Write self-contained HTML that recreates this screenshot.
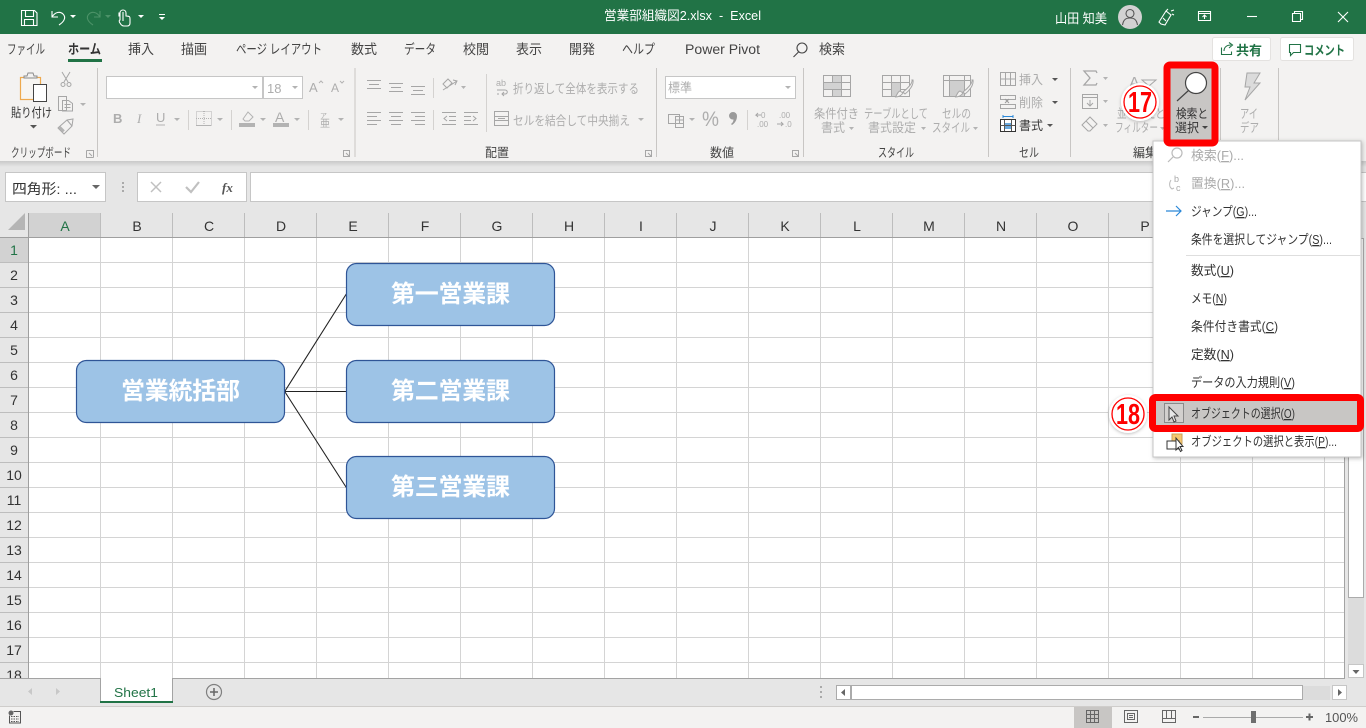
<!DOCTYPE html>
<html lang="ja"><head><meta charset="utf-8"><title>営業部組織図2.xlsx - Excel</title>
<style>
html,body{margin:0;padding:0;background:#fff;overflow:hidden}
svg{display:block}
text{font-family:"Liberation Sans","Noto Sans CJK JP",sans-serif;font-size:12.5px;fill:#444;white-space:pre}
.g{fill:#adadad}
.t{font-size:13.500px;fill:#444}
.h{font-size:14px;fill:#333;text-anchor:middle}
.w{fill:#fff;font-size:13px}
.s{fill:#fff;font-size:24px;font-weight:700;text-anchor:middle}
.m{font-size:13px;fill:#333}
.mg{font-size:13px;fill:#aaa}
.u{text-decoration:underline}
.i{fill:none;stroke:#b3b3b3;stroke-width:1}
.n{fill:none;stroke:#a6a6a6;stroke-width:1}
.a{fill:#b3b3b3}
.c{font-size:29px;font-weight:700;fill:#f00;text-anchor:middle}
</style></head><body>
<svg width="1366" height="728" viewBox="0 0 1366 728" xmlns="http://www.w3.org/2000/svg">
<defs>
<linearGradient id="sh" x1="0" y1="0" x2="0" y2="1"><stop offset="0" stop-color="#c9c9c9"/><stop offset="1" stop-color="#e6e6e6"/></linearGradient>
<filter id="ms" x="-5%" y="-5%" width="110%" height="110%"><feDropShadow dx="1" dy="1" stdDeviation="2" flood-color="#000" flood-opacity=".25"/></filter>
<filter id="cs" x="-30%" y="-30%" width="160%" height="160%"><feDropShadow dx="0" dy="1" stdDeviation="1.500" flood-color="#000" flood-opacity=".25"/></filter>
</defs>

<!-- backgrounds -->
<rect width="1366" height="728" fill="#fff"/>
<rect y="34" width="1366" height="128" fill="#f3f2f1"/>
<rect width="1366" height="34" fill="#217346"/>
<rect y="161" width="1366" height="52" fill="#e6e6e6"/>
<rect y="161" width="1366" height="6" fill="url(#sh)"/>

<!-- title bar -->
<g fill="none" stroke="#fff" stroke-width="1.100">
<path d="M21.500 10.500h13l2.500 2.500v12.500h-15.500z"/><path d="M25.500 10.500v6h8v-6M24.500 25.500v-6h9v6"/>
<path d="M52 11v6h6M52 17c3-5 8-6 11-3 3 3 2 7-4 11"/>
</g>
<path d="M70 15h6l-3 3z" fill="#fff"/>
<g fill="none" stroke="#4c9268" stroke-width="1.100"><path d="M100 11v6h-6M100 17c-3-5-8-6-11-3-3 3-2 7 4 11"/></g>
<path d="M105 15h6l-3 3z" fill="#4c9268"/>
<g fill="none" stroke="#fff" stroke-width="1.100"><path d="M120 20v-7c0-4 6-4 6 0v3c4 0 4 1 4 3v4c0 2-1 3-3 3h-3c-2 0-3-1-4-3-1-1-1-3 0-3zM120 13h-1v3h1M123 12v9"/></g>
<path d="M138 15h6l-3 3z" fill="#fff"/>
<path d="M159 14h6v1h-6zM159 17h6l-3 3z" fill="#fff"/>
<text x="604" y="20" class="w" textLength="157" lengthAdjust="spacingAndGlyphs">営業部組織図2.xlsx  -  Excel</text>
<text x="1055" y="23" class="w" textLength="52" lengthAdjust="spacingAndGlyphs">山田 知美</text>
<circle cx="1130" cy="17" r="12" fill="#d2d2d2"/>
<g fill="none" stroke="#555" stroke-width="1.100"><circle cx="1130" cy="13.500" r="4"/><path d="M1122.500 25c1-6 4-7 7.500-7s6.500 1 7.500 7"/></g>
<g fill="none" stroke="#fff" stroke-width="1.100"><path d="M1161 24l-2-2 7-11 5 4-6 10zM1166 11l2-2M1171 11l3-1M1172 14l2 1M1163 18l3 3"/></g>
<g fill="none" stroke="#fff" stroke-width="1.100"><path d="M1198.500 11.500h12v9h-12zM1198.500 13.500h12M1204.500 19v-4M1202.500 17l2-2 2 2"/></g>
<path d="M1247 16.500h10" stroke="#fff" stroke-width="1.100"/>
<g fill="none" stroke="#fff" stroke-width="1.100"><path d="M1292.500 13.500h8v8h-8zM1294.500 13.500v-2h8v8h-2"/></g>
<path d="M1338 12l10 10M1348 12l-10 10" stroke="#fff" stroke-width="1.100"/>

<!-- tabs -->
<text x="7" y="54" class="t" textLength="38" lengthAdjust="spacingAndGlyphs">ファイル</text>
<text x="68" y="54" class="t" style="font-weight:700;fill:#333" textLength="33" lengthAdjust="spacingAndGlyphs">ホーム</text>
<rect x="68" y="59" width="34" height="3" fill="#217346"/>
<text x="128" y="54" class="t" textLength="26" lengthAdjust="spacingAndGlyphs">挿入</text>
<text x="181" y="54" class="t" textLength="26" lengthAdjust="spacingAndGlyphs">描画</text>
<text x="236" y="54" class="t" textLength="86" lengthAdjust="spacingAndGlyphs">ページ レイアウト</text>
<text x="351" y="54" class="t" textLength="26" lengthAdjust="spacingAndGlyphs">数式</text>
<text x="404" y="54" class="t" textLength="32" lengthAdjust="spacingAndGlyphs">データ</text>
<text x="463" y="54" class="t" textLength="26" lengthAdjust="spacingAndGlyphs">校閲</text>
<text x="516" y="54" class="t" textLength="26" lengthAdjust="spacingAndGlyphs">表示</text>
<text x="569" y="54" class="t" textLength="26" lengthAdjust="spacingAndGlyphs">開発</text>
<text x="622" y="54" class="t" textLength="33" lengthAdjust="spacingAndGlyphs">ヘルプ</text>
<text x="685" y="54" class="t" textLength="75" lengthAdjust="spacingAndGlyphs">Power Pivot</text>
<g fill="none" stroke="#444" stroke-width="1.100"><circle cx="802" cy="48" r="5"/><path d="M798.500 52l-5 5"/></g>
<text x="819" y="54" class="t" textLength="26" lengthAdjust="spacingAndGlyphs">検索</text>

<!-- share / comment -->
<rect x="1212.500" y="37.500" width="58" height="23" rx="2" fill="#fff" stroke="#e4e2e0"/>
<rect x="1280.500" y="37.500" width="73" height="23" rx="2" fill="#fff" stroke="#e4e2e0"/>
<g fill="none" stroke="#217346" stroke-width="1.100"><path d="M1221.500 47.500v7h10v-3M1224 51c0-4 3-6 7-6M1229 42.500l3.500 2.500-3.500 3"/></g>
<text x="1236" y="55" style="font-size:13px;font-weight:700;fill:#217346" textLength="26">共有</text>
<path d="M1289.500 44.500h11v8h-7l-3 3v-3h-1z" fill="none" stroke="#217346" stroke-width="1.100"/>
<text x="1304" y="55" style="font-size:13px;font-weight:700;fill:#217346" textLength="41" lengthAdjust="spacingAndGlyphs">コメント</text>

<!-- ribbon separators -->
<path d="M97.500 68v89M355 68v89M656.500 68v89M803.500 68v89M988.500 68v89M1070.500 68v89M1220.500 68v72M1278.500 68v72" stroke="#c8c6c4"/>
<path d="M433.500 78v20M433.500 110v20M486.500 74v58M188.500 110v20M231.500 110v20M308.500 110v20M747.500 110v20" stroke="#d4d2d0"/>

<!-- clipboard -->
<rect x="20.500" y="77.500" width="20" height="22" fill="#f7f5f2" stroke="#eea94e" stroke-width="1.200"/>
<path d="M24 78h13v-2h-3l-1-3h-5l-1 3h-3z" fill="#f3f2f1" stroke="#8a8a8a"/>
<rect x="33.500" y="84.500" width="13" height="17" fill="#fff" stroke="#444"/>
<text x="11" y="117" style="fill:#333" textLength="41" lengthAdjust="spacingAndGlyphs">貼り付け</text>
<path d="M30 125h7l-3.500 3.500z" fill="#555"/>
<g class="n"><path d="M62 72l6 10M70 72l-6 10"/><circle cx="63" cy="84.500" r="2"/><circle cx="69" cy="84.500" r="2"/></g>
<g class="n"><path d="M58.500 96.500h8v14h-8zM62.500 100.500h6l4 3v7.500h-10zM64.500 104.500h6M64.500 107.500h6"/></g>
<path d="M80 103h6l-3 3z" class="a"/>
<g class="n"><path d="M59 127l8-7 6-1-1 7-8 8-6-6zM67 120l5 6"/></g>
<rect x="59" y="128" width="6" height="3" class="a" transform="rotate(45 62 129)"/>
<text x="11" y="157" style="fill:#444" textLength="60" lengthAdjust="spacingAndGlyphs">クリップボード</text>
<g class="n"><path d="M86.500 150.500h7v7M86.500 150.500v7h7M89 153l3 3"/></g>

<!-- font -->
<rect x="106.500" y="76.500" width="156" height="22" fill="#fff" stroke="#c6c6c6"/>
<rect x="263.500" y="76.500" width="39" height="22" fill="#fff" stroke="#c6c6c6"/>
<path d="M252 86h6l-3 3zM292 86h6l-3 3z" class="a"/>
<text x="267" y="93" class="g" style="font-size:13px">18</text>
<text x="309" y="92" class="g" style="font-size:13px">A</text><path d="M319 83l2-2 2 2" class="i"/>
<text x="331" y="92" class="g" style="font-size:12px">A</text><path d="M340 81l2 2 2-2" class="i"/>
<text x="113" y="123" class="g" style="font-size:13px;font-weight:700">B</text>
<text x="137" y="123" class="g" style="font-size:13px;font-style:italic;font-family:'Liberation Serif',serif">I</text>
<text x="156" y="122" class="g" style="font-size:13px">U</text><path d="M156 125h9" class="i"/>
<path d="M174 118h6l-3 3z" class="a"/>
<g class="i" stroke-dasharray="1 1"><path d="M196.500 111.500h15v14h-15zM204 111v14M196 118.500h15"/></g>
<path d="M196 125.500h15" class="i"/>
<path d="M217 118h6l-3 3z" class="a"/>
<path d="M243 119l5-7 5 5-4 4h-4z" class="i"/><rect x="239" y="123" width="16" height="4" class="a"/>
<path d="M260 118h6l-3 3z" class="a"/>
<text x="275" y="122" class="g" style="font-size:14px">A</text><rect x="273" y="123" width="16" height="4" class="a"/>
<path d="M294 118h6l-3 3z" class="a"/>
<text x="320" y="118" class="g" style="font-size:7px">ア</text><text x="320" y="127" class="g" style="font-size:10px">亜</text>
<path d="M338 118h6l-3 3z" class="a"/>

<!-- alignment -->
<path class="n" d="M367 80.500h14M369 84.500h10M367 88.500h14M389 83.500h14M391 87.500h10M389 91.500h14M411 86.500h14M413 90.500h10M411 94.500h14"/>
<path class="n" d="M367 112.500h14M367 116.500h10M367 120.500h14M367 124.500h10M389 112.500h14M391 116.500h10M389 120.500h14M391 124.500h10M411 112.500h14M415 116.500h10M411 120.500h14M415 124.500h10"/>
<g class="n"><path d="M443 90l14-9M453 80l4 1-2 4M443 84l5-5 4 4-5 5z"/></g>
<path d="M461 86h5l-2.500 3z" class="a"/>
<path class="n" d="M442 112.500h14M449 116.500h7M449 120.500h7M442 124.500h14M447 116l-3 2.500 3 2.500M464 112.500h14M464 116.500h7M464 120.500h7M464 124.500h14M473 116l3 2.500-3 2.500"/>
<text x="496" y="86" class="g" style="font-size:9px">ab</text><path class="n" d="M497 90h8c3 0 3 4 0 4h-3M504 92l-2 2 2 2M497 94h2"/>
<text x="513" y="93" class="g" textLength="126" lengthAdjust="spacingAndGlyphs">折り返して全体を表示する</text>
<g class="n"><path d="M494.500 111.500h14v14h-14zM494.500 116.500h14M494.500 120.500h14M498 118.500h7"/></g>
<text x="513" y="125" class="g" textLength="117" lengthAdjust="spacingAndGlyphs">セルを結合して中央揃え</text>
<path d="M638 118h6l-3 3z" class="a"/>
<text x="485" y="157" style="fill:#444" textLength="24" lengthAdjust="spacingAndGlyphs">配置</text>
<g class="n"><path d="M645.500 150.500h6v6h-6zM648 153l3 3"/></g>
<g class="n"><path d="M343.500 150.500h6v6h-6zM346 153l3 3"/></g>

<!-- number -->
<rect x="665.500" y="76.500" width="130" height="22" fill="#fff" stroke="#c6c6c6"/>
<text x="668" y="92" class="g" textLength="24" lengthAdjust="spacingAndGlyphs">標準</text>
<path d="M785 86h6l-3 3z" class="a"/>
<g class="n"><path d="M668.500 114.500h11v9h-11zM675.500 116.500h8v11h-8zM675.500 120h8M675.500 123.500h8"/></g>
<path d="M689 118h6l-3 3z" class="a"/>
<text x="702" y="126" class="g" style="font-size:21px" textLength="17" lengthAdjust="spacingAndGlyphs">%</text>
<path d="M729 116a4 4 0 1 1 8 0c0 4-2 7-5 9l-1-1c1.500-1 2.500-2.500 2.500-4.500a4 4 0 0 1-4.500-3.500z" fill="#9a9a9a"/>
<text x="761" y="118" class="g" style="font-size:8px">0</text><text x="757" y="127" class="g" style="font-size:8px">.00</text><path class="n" d="M761 115h-5l2-2M756 115l2 2"/>
<text x="779" y="118" class="g" style="font-size:8px">.00</text><text x="785" y="127" class="g" style="font-size:8px">.0</text><path class="n" d="M777 124h6l-2-2M783 124l-2 2"/>
<text x="710" y="157" style="fill:#444" textLength="24" lengthAdjust="spacingAndGlyphs">数値</text>
<g class="n"><path d="M792.500 150.500h6v6h-6zM795 153l3 3"/></g>

<!-- styles -->
<g class="n"><path d="M823.500 75.500h27v21h-27zM823.500 82.500h27M823.500 89.500h27M832.500 75.500v21M841.500 75.500v21"/></g>
<path d="M833 76h8v6h-8zM824 83h9v6h-9zM833 83h8v6h-8zM833 90h8v6h-8z" fill="#d2d2d2"/>
<g class="n"><path d="M882.500 75.500h27v21h-27zM882.500 82.500h27M882.500 89.500h27M891.500 75.500v21M900.500 75.500v21"/></g>
<path d="M892 83h8v13h-8z" fill="#cfcfcf"/>
<path d="M912 80c1 3-5 9-9 12l2 2c4-3 9-9 8-14z" fill="#f3f2f1" stroke="#a6a6a6"/>
<path d="M903 93c-2 3-5 4-8 4 2-1 2-5 5-6z" fill="#f3f2f1" stroke="#a6a6a6"/>
<g class="n"><path d="M943.500 75.500h27v21h-27zM943.500 80.500h27M949.500 75.500v21M964.500 75.500v21"/></g>
<path d="M950 81h14v15h-14z" fill="#cfcfcf"/>
<path d="M972 80c1 3-5 9-9 12l2 2c4-3 9-9 8-14z" fill="#f3f2f1" stroke="#a6a6a6"/>
<path d="M963 93c-2 3-5 4-8 4 2-1 2-5 5-6z" fill="#f3f2f1" stroke="#a6a6a6"/>
<text x="814" y="118" class="g" textLength="45" lengthAdjust="spacingAndGlyphs">条件付き</text>
<text x="821" y="132" class="g" textLength="24" lengthAdjust="spacingAndGlyphs">書式</text><path d="M849 127h5l-2.500 3z" class="a"/>
<text x="864" y="118" class="g" textLength="64" lengthAdjust="spacingAndGlyphs">テーブルとして</text>
<text x="868" y="132" class="g" textLength="48" lengthAdjust="spacingAndGlyphs">書式設定</text><path d="M921 127h5l-2.500 3z" class="a"/>
<text x="942" y="118" class="g" textLength="29" lengthAdjust="spacingAndGlyphs">セルの</text>
<text x="932" y="132" class="g" textLength="38" lengthAdjust="spacingAndGlyphs">スタイル</text><path d="M973 127h5l-2.500 3z" class="a"/>
<text x="878" y="157" style="fill:#444" textLength="36" lengthAdjust="spacingAndGlyphs">スタイル</text>

<!-- cells -->
<g class="n"><path d="M1000.500 72.500h15v13h-15zM1005.500 72.500v13M1010.500 72.500v13M1000.500 79h15"/></g>
<text x="1019" y="84" class="g" textLength="24" lengthAdjust="spacingAndGlyphs">挿入</text><path d="M1052 78h6l-3 3z" fill="#555"/>
<g class="n"><path d="M1000.500 95.500h15v4h-15zM1000.500 104.500h15v4h-15z"/></g>
<path d="M1005 99l4 4M1009 99l-4 4" stroke="#999"/>
<text x="1019" y="107" class="g" textLength="24" lengthAdjust="spacingAndGlyphs">削除</text><path d="M1052 101h6l-3 3z" fill="#555"/>
<rect x="1000.500" y="119.500" width="15" height="12" fill="#fff" stroke="#333"/><rect x="1004" y="123" width="8" height="6" fill="#6aa9dd"/>
<path d="M1003 116.500h10M1003 115v3M1013 115v3" stroke="#2b88d8"/>
<path d="M1000.500 125.500h15M1004.500 120v11M1011.500 120v11" stroke="#555"/>
<text x="1019" y="130" style="fill:#333" textLength="24" lengthAdjust="spacingAndGlyphs">書式</text><path d="M1047 124h6l-3 3z" fill="#555"/>
<text x="1019" y="157" style="fill:#444" textLength="20" lengthAdjust="spacingAndGlyphs">セル</text>

<!-- editing -->
<path class="n" style="stroke-width:1.300" d="M1097 73l-1-2h-12l6 7-6 7h12l1-2"/>
<path d="M1103 77h5l-2.500 3z" class="a"/>
<g class="n"><path d="M1082.500 94.500h15v14h-15zM1082.500 97.500h15M1090 100v6M1087 103l3 3 3-3"/></g>
<path d="M1103 100h5l-2.500 3z" class="a"/>
<g class="n"><path d="M1082 125l8-8 7 7-7 7h-2zM1086 121l7 7"/></g>
<path d="M1103 124h5l-2.500 3z" class="a"/>
<text x="1129" y="88" class="g" style="font-size:16px">A</text>
<path d="M1142 80h14l-7 6z" class="n"/>
<text x="1117" y="118" class="g" textLength="48" lengthAdjust="spacingAndGlyphs">並べ替えと</text>
<text x="1115" y="132" class="g" textLength="43" lengthAdjust="spacingAndGlyphs">フィルター</text>
<path d="M1160 127h5l-2.500 3z" class="a"/>
<text x="1133" y="157" style="fill:#444" textLength="24" lengthAdjust="spacingAndGlyphs">編集</text>

<!-- idea -->
<path d="M1247 73h13l-6 10h6l-15 17 5-13h-5z" fill="#dbdbdb" stroke="#a6a6a6"/>
<text x="1240" y="118" class="g" textLength="18" lengthAdjust="spacingAndGlyphs">アイ</text>
<text x="1240" y="132" class="g" textLength="19" lengthAdjust="spacingAndGlyphs">デア</text>

<!-- formula bar -->
<rect x="5.500" y="172.500" width="100" height="29" fill="#fff" stroke="#c6c6c6"/>
<text x="12" y="194" style="font-size:14px;fill:#333" textLength="65" lengthAdjust="spacingAndGlyphs">四角形: ...</text>
<path d="M92 185h8l-4 4z" fill="#666"/>
<path d="M122 182h2v2h-2zM122 186h2v2h-2zM122 190h2v2h-2z" fill="#aaa"/>
<rect x="137.500" y="172.500" width="109" height="29" fill="#fff" stroke="#c6c6c6"/>
<path d="M151 182l10 10M161 182l-10 10" stroke="#c0c0c0" stroke-width="1.500"/>
<path d="M186 187l5 5 8-10" fill="none" stroke="#c0c0c0" stroke-width="2.200"/>
<text x="222" y="192" style="font:italic 700 13px 'Liberation Serif',serif;fill:#555">fx</text>
<rect x="250.500" y="172.500" width="1120" height="29" fill="#fff" stroke="#c6c6c6"/>

<!-- header bars -->
<rect y="213" width="1345" height="24" fill="#e6e6e6"/>
<rect x="0" y="237" width="28" height="441" fill="#e6e6e6"/>
<rect x="29" y="213" width="72" height="24" fill="#d2d2d2"/>
<rect y="238" width="28" height="24" fill="#d2d2d2"/>
<path d="M25 230l0-17-17 17z" fill="#b5b5b5"/>
<path d="M0 237.500h1345M28.500 213v465" stroke="#9f9f9f"/>
<path d="M100.500 213v24M172.500 213v24M244.500 213v24M316.500 213v24M388.500 213v24M460.500 213v24M532.500 213v24M604.500 213v24M676.500 213v24M748.500 213v24M820.500 213v24M892.500 213v24M964.500 213v24M1036.500 213v24M1108.500 213v24M1180.500 213v24M1252.500 213v24M1324.500 213v24" stroke="#bdbdbd"/>
<path d="M0 262.500h28M0 287.500h28M0 312.500h28M0 337.500h28M0 362.500h28M0 387.500h28M0 412.500h28M0 437.500h28M0 462.500h28M0 487.500h28M0 512.500h28M0 537.500h28M0 562.500h28M0 587.500h28M0 612.500h28M0 637.500h28M0 662.500h28" stroke="#bdbdbd"/>
<text x="65" y="231" class="h" style="fill:#217346">A</text>
<text x="137" y="231" class="h">B</text><text x="209" y="231" class="h">C</text><text x="281" y="231" class="h">D</text><text x="353" y="231" class="h">E</text><text x="425" y="231" class="h">F</text><text x="497" y="231" class="h">G</text><text x="569" y="231" class="h">H</text><text x="641" y="231" class="h">I</text><text x="713" y="231" class="h">J</text><text x="785" y="231" class="h">K</text><text x="857" y="231" class="h">L</text><text x="929" y="231" class="h">M</text><text x="1001" y="231" class="h">N</text><text x="1073" y="231" class="h">O</text><text x="1145" y="231" class="h">P</text>
<text x="14" y="255" class="h" style="fill:#217346">1</text>
<text x="14" y="280" class="h">2</text><text x="14" y="305" class="h">3</text><text x="14" y="330" class="h">4</text><text x="14" y="355" class="h">5</text><text x="14" y="380" class="h">6</text><text x="14" y="405" class="h">7</text><text x="14" y="430" class="h">8</text><text x="14" y="455" class="h">9</text><text x="14" y="480" class="h">10</text><text x="14" y="505" class="h">11</text><text x="14" y="530" class="h">12</text><text x="14" y="555" class="h">13</text><text x="14" y="580" class="h">14</text><text x="14" y="605" class="h">15</text><text x="14" y="630" class="h">16</text><text x="14" y="655" class="h">17</text><text x="14" y="680" class="h">18</text>

<!-- grid -->
<path stroke="#d4d4d4" d="M100.500 238v440M172.500 238v440M244.500 238v440M316.500 238v440M388.500 238v440M460.500 238v440M532.500 238v440M604.500 238v440M676.500 238v440M748.500 238v440M820.500 238v440M892.500 238v440M964.500 238v440M1036.500 238v440M1108.500 238v440M1180.500 238v440M1252.500 238v440M1324.500 238v440M29 262.500h1315M29 287.500h1315M29 312.500h1315M29 337.500h1315M29 362.500h1315M29 387.500h1315M29 412.500h1315M29 437.500h1315M29 462.500h1315M29 487.500h1315M29 512.500h1315M29 537.500h1315M29 562.500h1315M29 587.500h1315M29 612.500h1315M29 637.500h1315M29 662.500h1315"/>

<!-- shapes -->
<path d="M284.700 391.500L346.300 294M284.700 391.500H346.300M284.700 391.500L346.300 487.500" stroke="#222" stroke-width="1.100" fill="none"/>
<g fill="#9dc3e6" stroke="#2f5597" stroke-width="1.200">
<rect x="76.500" y="360.500" width="208" height="62" rx="10"/>
<rect x="346.500" y="263.500" width="208" height="62" rx="10"/>
<rect x="346.500" y="360.500" width="208" height="62" rx="10"/>
<rect x="346.500" y="456.500" width="208" height="62" rx="10"/>
</g>
<text x="180.500" y="399" class="s" textLength="119">営業統括部</text>
<text x="450.500" y="302" class="s" textLength="119">第一営業課</text>
<text x="450.500" y="399" class="s" textLength="119">第二営業課</text>
<text x="450.500" y="495" class="s" textLength="119">第三営業課</text>

<!-- right scrollbar -->
<rect x="1345" y="213" width="21" height="465" fill="#e6e6e6"/>
<path d="M1344.500 213v465" stroke="#a3a3a3"/>
<rect x="1348" y="238" width="16" height="426" fill="#dcdcdc"/>
<rect x="1348.500" y="238.500" width="15" height="359" fill="#fff" stroke="#ababab"/>
<rect x="1348.500" y="664.500" width="15" height="13" fill="#fff" stroke="#c6c6c6"/>
<path d="M1352.500 670h7l-3.500 4z" fill="#666"/>

<!-- bottom bars -->
<rect y="678" width="1366" height="28" fill="#e6e6e6"/>
<path d="M0 678.500h1345" stroke="#a3a3a3"/>
<rect y="706" width="1366" height="22" fill="#f3f2f1"/>
<path d="M0 706.500h1366" stroke="#cfcdcb"/>
<path d="M32 688v7l-4-3.500zM56 688v7l4-3.500z" fill="#c8c8c8"/>
<rect x="100" y="678" width="73" height="24" fill="#fff"/>
<path d="M100.500 678v24M172.500 678v24" stroke="#a3a3a3"/>
<rect x="100" y="701" width="73" height="2" fill="#217346"/>
<text x="114" y="697" style="font-size:13px;fill:#217346" textLength="44" lengthAdjust="spacingAndGlyphs">Sheet1</text>
<circle cx="214" cy="692" r="7.500" fill="none" stroke="#808080" stroke-width="1.200"/>
<path d="M210 692h8M214 688v8" stroke="#666" stroke-width="1.500"/>
<path d="M820 686h2v2h-2zM820 691h2v2h-2zM820 696h2v2h-2z" fill="#aaa"/>
<rect x="836.500" y="685.500" width="14" height="14" fill="#fff" stroke="#ababab"/>
<rect x="851.500" y="685.500" width="451" height="14" fill="#fff" stroke="#ababab"/>
<rect x="1303" y="686" width="27" height="14" fill="#dcdcdc"/>
<rect x="1332.500" y="685.500" width="14" height="14" fill="#fff" stroke="#c6c6c6"/>
<path d="M845 689v7l-4-3.500zM1338 689v7l4-3.500z" fill="#666"/>

<!-- status bar -->
<circle cx="11" cy="713" r="2.500" fill="#666"/><path d="M13.500 711.500h7v11.500H9.500v-7.500" fill="none" stroke="#555"/><path d="M11 716.500h8M11 719h8M11 721.500h8" stroke="#555" stroke-dasharray="1.500 1"/>
<rect x="1074" y="707" width="38" height="21" fill="#c8c6c4"/>
<g fill="none" stroke="#666"><path d="M1086.500 710.500h12v12h-12zM1090.500 710.500v12M1094.500 710.500v12M1086.500 714.500h12M1086.500 718.500h12"/><path d="M1124.500 710.500h13v12h-13zM1127.500 713.500h7v6h-7zM1129 715.500h4M1129 717.500h4"/><path d="M1162.500 710.500h13v12h-13zM1162.500 718.500h13M1166.500 710.500v8M1171.500 710.500v8"/></g>
<path d="M1193 717h6" stroke="#666" stroke-width="2"/>
<path d="M1203 717.500h100" stroke="#aaa"/>
<rect x="1251" y="711" width="5" height="12" fill="#6e6e6e"/>
<path d="M1306 717h7M1309.500 713.500v7" stroke="#666" stroke-width="2"/>
<text x="1325" y="722" style="font-size:13px;fill:#555" textLength="33" lengthAdjust="spacingAndGlyphs">100%</text>

<!-- dropdown menu -->
<rect x="1153" y="141" width="208" height="316" fill="#fff" stroke="#c6c6c6" filter="url(#ms)"/>
<g fill="none" stroke="#bbb" stroke-width="1.200"><circle cx="1177" cy="153" r="5"/><path d="M1173 157l-5 5"/></g>
<text x="1191" y="160" class="mg" textLength="53" lengthAdjust="spacingAndGlyphs">検索(<tspan class="u">F</tspan>)...</text>
<text x="1174" y="182" class="mg" style="font-size:9px">b</text><text x="1176" y="191" class="mg" style="font-size:9px">c</text><path d="M1171 180c-2 3-2 7 1 9M1170 187l2 2 2-1" fill="none" stroke="#bbb"/>
<text x="1191" y="188" class="mg" textLength="54" lengthAdjust="spacingAndGlyphs">置換(<tspan class="u">R</tspan>)...</text>
<path d="M1166 211h15M1176 206l5 5-5 5" fill="none" stroke="#2b88d8" stroke-width="1.200"/>
<text x="1191" y="216" class="m" textLength="66" lengthAdjust="spacingAndGlyphs">ジャンプ(<tspan class="u">G</tspan>)...</text>
<text x="1191" y="244" class="m" textLength="141" lengthAdjust="spacingAndGlyphs">条件を選択してジャンプ(<tspan class="u">S</tspan>)...</text>
<path d="M1186 255.500h174" stroke="#dedede"/>
<text x="1191" y="275" class="m" textLength="43" lengthAdjust="spacingAndGlyphs">数式(<tspan class="u">U</tspan>)</text>
<text x="1191" y="303" class="m" textLength="36" lengthAdjust="spacingAndGlyphs">メモ(<tspan class="u">N</tspan>)</text>
<text x="1191" y="331" class="m" textLength="87" lengthAdjust="spacingAndGlyphs">条件付き書式(<tspan class="u">C</tspan>)</text>
<text x="1191" y="359" class="m" textLength="43" lengthAdjust="spacingAndGlyphs">定数(<tspan class="u">N</tspan>)</text>
<text x="1191" y="387" class="m" textLength="104" lengthAdjust="spacingAndGlyphs">データの入力規則(<tspan class="u">V</tspan>)</text>
<rect x="1155" y="400" width="203" height="26" fill="#c8c6c4"/>
<rect x="1164.500" y="403.500" width="19" height="19" fill="#d2d0ce" stroke="#8a8a8a"/>
<path d="M1169 407v13l3-3 2 5 2-1-2-5h4z" fill="#e8e8e8" stroke="#444"/>
<text x="1191" y="418" class="m" textLength="104" lengthAdjust="spacingAndGlyphs">オブジェクトの選択(<tspan class="u">O</tspan>)</text>
<rect x="1172" y="434" width="10" height="10" fill="#f6c76f" stroke="#c9a25a"/>
<rect x="1167" y="441" width="12" height="8" fill="#fff" stroke="#333"/>
<path d="M1176 438v12l2.500-2.500 2 4 1.500-1-2-4h3z" fill="#fff" stroke="#333"/>
<text x="1191" y="446" class="m" textLength="146" lengthAdjust="spacingAndGlyphs">オブジェクトの選択と表示(<tspan class="u">P</tspan>)...</text>

<!-- find & select highlighted button -->
<rect x="1170" y="68" width="42" height="72" fill="#c8c6c4"/>
<circle cx="1196" cy="83" r="10.500" fill="#fff" stroke="#444" stroke-width="1.200"/>
<path d="M1188.500 90.500L1177 101" stroke="#444" stroke-width="1.200"/>
<text x="1176" y="118" style="fill:#333" textLength="32" lengthAdjust="spacingAndGlyphs">検索と</text>
<text x="1175" y="132" style="fill:#333" textLength="24" lengthAdjust="spacingAndGlyphs">選択</text>
<path d="M1202 126h6l-3 3z" fill="#444"/>
<rect x="1167" y="65" width="48" height="78" rx="3" fill="none" stroke="#f00" stroke-width="7"/>
<rect x="1152.500" y="397.500" width="208" height="31" rx="3" fill="none" stroke="#f00" stroke-width="7"/>

<!-- callouts -->
<circle cx="1140" cy="102" r="19" fill="#fff" filter="url(#cs)"/>
<circle cx="1140" cy="102" r="16" fill="#fff" stroke="#f00" stroke-width="1.300"/>
<text x="1140" y="112" class="c" textLength="24" lengthAdjust="spacingAndGlyphs">17</text>
<circle cx="1128" cy="414" r="19" fill="#fff" filter="url(#cs)"/>
<circle cx="1128" cy="414" r="16" fill="#fff" stroke="#f00" stroke-width="1.300"/>
<text x="1128" y="424" class="c" textLength="24" lengthAdjust="spacingAndGlyphs">18</text>
</svg>
</body></html>
